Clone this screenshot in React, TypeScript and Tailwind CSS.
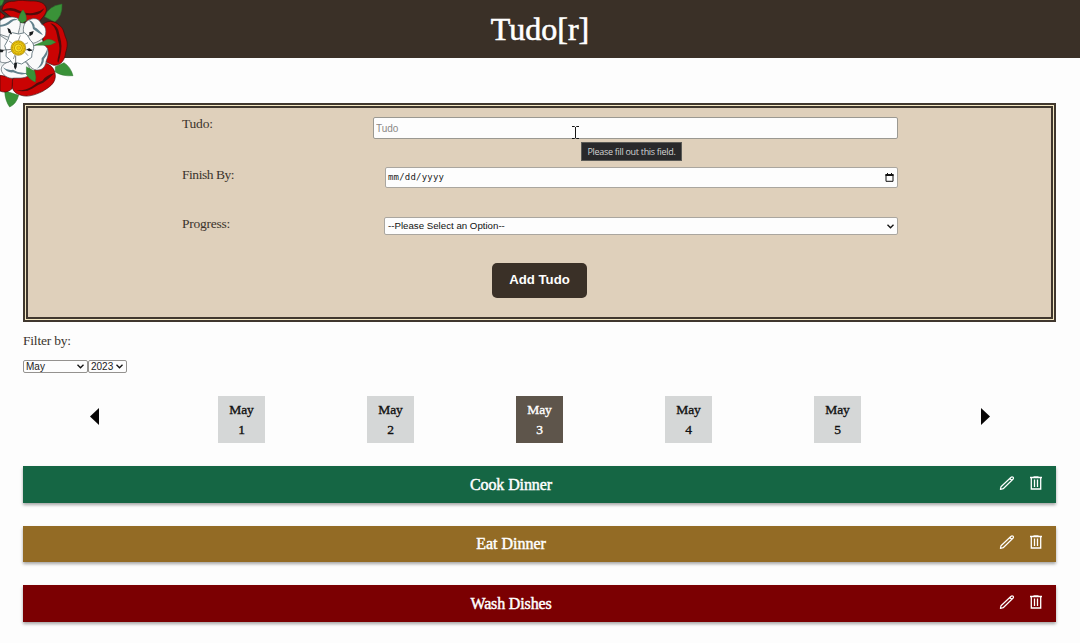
import React from "react";

const SERIF = "font-['Liberation_Serif',serif]";

function Rose() {
  return (
    <svg className="absolute left-0 top-0" width="110" height="115" viewBox="0 0 330 345" fill="none">
      <g fill="#3a9238" stroke="#28702a" strokeWidth="1.5">
        <path d="M134 50Q145 18 186 12Q188 48 164 66Z" />
        <path d="M166 200L192 188Q212 201 219 227Q188 230 166 216Z" />
        <path d="M14 272L56 286Q49 312 29 321Q15 302 14 272Z" />
        <path d="M0 0H12L6 14L0 18Z" />
      </g>
      <g fill="#ca0303" stroke="#450808" strokeWidth="2">
        <path d="M6 30C8 12 22 3 42 4C60 -2 78 3 92 3C116 2 136 8 139 26C141 41 124 56 118 64L66 65L34 52Z" />
        <path d="M124 78C139 58 165 62 178 76C191 84 192 101 197 113C204 126 202 143 197 157C195 179 184 197 161 196L139 187L130 126Z" />
        <path d="M39 234L87 225L116 200L139 190C158 198 166 211 166 230C164 254 144 263 128 274C105 285 82 293 61 285C38 279 31 260 39 234Z" />
        <path d="M0 226L38 232L36 266C22 279 9 277 0 273Z" />
        <path d="M0 35L15 47L6 57L0 55Z" />
      </g>
      <g fill="#510b0b">
        <path d="M8 30Q34 17 59 32Q83 44 107 37Q121 34 133 25Q122 46 101 45Q80 49 54 38Q30 27 8 35Z" />
        <path d="M151 70Q167 73 175 91Q179 108 183 124Q188 151 175 188Q170 187 175 168Q182 143 174 121Q171 104 168 93Q163 79 151 70Z" />
        <path d="M163 220Q139 225 127 242Q109 247 95 260Q77 272 48 271Q76 278 96 266Q112 254 130 248Q147 237 163 220Z" />
      </g>
      <circle cx="55" cy="144" r="76" fill="#e9eded" />
      <g fill="#fafafa" stroke="#45555c" strokeWidth="2">
        <path d="M0 62C15 50 43 47 56 57C66 67 58 84 54 104L27 112L0 103Z" />
        <path d="M72 106C66 81 73 62 94 57C112 52 120 63 125 73C140 79 139 99 135 108C123 122 106 129 98 130Z" />
        <path d="M100 138C119 128 135 132 142 145C148 161 142 174 138 184C137 202 124 212 109 210C91 208 84 188 75 181Z" />
        <path d="M37 181L72 182C87 194 95 211 86 225C74 239 48 232 36 235C17 234 1 218 4 204C9 190 24 186 37 181Z" />
        <path d="M0 106L27 124L20 158L36 179C26 190 9 190 0 185Z" />
      </g>
      <g fill="#61818c">
        <path d="M0 75Q18 73 31 61Q44 51 56 61Q43 58 34 67Q18 81 0 80Z" />
        <path d="M85 60Q104 65 104 82Q118 89 129 106Q115 99 99 87Q98 71 85 60Z" />
        <path d="M142 144Q146 162 132 177Q132 198 109 207Q127 193 125 175Q139 159 142 144Z" />
        <path d="M9 202Q23 213 39 209Q61 223 86 218Q66 229 39 217Q20 219 9 202Z" />
      </g>
      <g fill="#3a9238" stroke="#28702a" strokeWidth="1">
        <path d="M69 29Q82 46 79 62L66 69L55 61Q58 39 69 29Z" />
        <path d="M134 122Q148 112 168 127Q155 136 141 136L104 136Z" />
        <path d="M79 200L104 213Q110 230 106 247Q88 239 79 223Z" />
      </g>
      <path d="M37 98Q58 106 73 98Q85 105 91 121Q103 130 101 146Q94 160 95 172Q78 184 65 192Q52 185 40 193Q29 176 18 169Q22 150 14 137Q27 117 29 103Z" fill="#fff" stroke="#71838a" strokeWidth="3" />
      <g stroke="#62686a" strokeWidth="2">
        <path d="M55 122L61 106M74 133L84 128M75 157L84 167M45 164L40 177M36 153L25 158M38 131L27 123" />
      </g>
      <g stroke="#34383a" strokeWidth="2">
        <path d="M33 103L29 93M84 109L94 99M77 149L94 151M47 167L47 190M34 148L5 151" />
      </g>
      <g fill="#181c1e">
        <path d="M22 83l8 5 6 15-10-5Z" />
        <path d="M101 93l-13 4 1 12 9-6Z" />
        <path d="M80 148l8-3 6 4 3-1-1 4-9 2Z" />
        <path d="M43 188h8l-1 13-4 8-4-8Z" />
        <path d="M0 148l11 2-3 7H0Z" />
      </g>
      <circle cx="55" cy="144" r="22" fill="#efc90b" stroke="#977d10" strokeWidth="2" />
      <circle cx="55" cy="144" r="18" stroke="#a88009" strokeWidth="3" strokeDasharray="3 2" />
      <circle cx="55" cy="144" r="12" fill="#fbe52c" stroke="#ad8409" strokeWidth="2" />
      <circle cx="56" cy="144" r="6" fill="#f4ca09" stroke="#bf980c" strokeWidth="2" />
    </svg>
  );
}

function Chevron() {
  return (
    <svg width="7" height="5" viewBox="0 0 7 5" fill="none" className="shrink-0">
      <path d="M.5 .7L3.5 3.8L6.5 .7" stroke="#111" strokeWidth="1.3" />
    </svg>
  );
}

function Actions() {
  return (
    <div className="flex gap-[14px] pr-[13px] pb-[3px]">
      <button aria-label="Edit">
        <svg width="16" height="16" viewBox="0 0 16 16" fill="none" stroke="#fff" strokeWidth="1.2" strokeLinejoin="round">
          <path d="M1.4 14.4L2 11.7L11.8 2.5Q13 1.4 14.1 2.3Q15 3.1 13.9 4.3L4.2 13.7ZM10.8 3.5L12.7 5.3" />
        </svg>
      </button>
      <button aria-label="Delete">
        <svg width="14" height="16" viewBox="0 0 14 16" fill="none" stroke="#fff" strokeWidth="1.3">
          <path d="M1 2.5H13M4.5 1.8H9.5M2.3 2.5V14H11.7V2.5M5.5 4.5V12M8.5 4.5V12" />
        </svg>
      </button>
    </div>
  );
}

const days = [1, 2, 3, 4, 5];
const tasks = [
  { name: "Cook Dinner", color: "bg-[#156644]", tracking: "tracking-[-0.1px]" },
  { name: "Eat Dinner", color: "bg-[#936b25]", tracking: "tracking-[0px]" },
  { name: "Wash Dishes", color: "bg-[#7b0002]", tracking: "tracking-[-0.15px]" },
];

export default function App() {
  return (
    <div className={`relative h-[643px] w-[1080px] overflow-hidden bg-[#fdfdfd] text-[#3b342c] ${SERIF}`}>
      <header className="flex h-[58px] items-center justify-center bg-[#3a3027]">
        <h1 className="text-[32px] leading-[58px] text-white [-webkit-text-stroke:0.6px_white]">Tudo[r]</h1>
      </header>
      <Rose />

      <main className="px-[23px] pt-[45px]">
        <form className="h-[219px] w-[1033px] border-[2px] border-[#40372e] bg-[#f4e8c3] p-px">
          <div className="h-full border-[2px] border-[#40372e] bg-[#dfd0bb] pl-[154px] pr-[153px] pt-[9px] text-[13.5px]">
            <div className="flex h-[50px] justify-between">
              <label className="leading-[14px] tracking-[-0.2px]">Tudo:</label>
              <div className="relative h-[22px] w-[525px]">
                <input placeholder="Tudo" className="block h-full w-full rounded-[2px] border border-[#9b9992] bg-[#fdfdfd] px-[2px] font-['Liberation_Sans',sans-serif] text-[10px] placeholder:text-[#8c8987]" />
                <svg className="absolute left-[199px] top-[9px]" width="7" height="13" viewBox="0 0 7 13" fill="none">
                  <path d="M0 .5H2.5L3.5 1.5L4.5 .5H7M3.5 1V12M0 12.5H2.5L3.5 11.5L4.5 12.5H7" stroke="#161616" />
                </svg>
                <div className="absolute left-[208px] top-[25px] z-10 flex h-[19px] w-[101px] items-center justify-center whitespace-nowrap border border-[#5b5b57] bg-[#29292b] font-['Open_Sans',sans-serif] text-[9px] tracking-[-0.3px] text-[#d3d3d3]">Please fill out this field.</div>
              </div>
            </div>
            <div className="flex h-[50px] justify-between">
              <label className="leading-[15px] tracking-[-0.45px]">Finish By:</label>
              <div className="flex h-[21px] w-[513px] items-center justify-between rounded-[2px] border border-[#aaa69f] bg-[#fdfdfd] pl-[2px] pr-[3px] font-['DejaVu_Sans_Mono',monospace] text-[9px] tracking-[0.2px] text-[#222]">
                <span className="pt-px">mm/dd/yyyy</span>
                <svg width="9" height="9" viewBox="0 0 9 9" fill="none"><path d="M1 1.5H8V8.3H1Z" stroke="#111" /><path d="M.5 1H8.5V3H.5ZM2 0H3V1H2ZM6 0H7V1H6Z" fill="#111" /></svg>
              </div>
            </div>
            <div className="flex h-[46px] justify-between">
              <label className="leading-[14px] tracking-[-0.25px]">Progress:</label>
              <div className="flex h-[18px] w-[514px] items-center justify-between rounded-[2px] border border-[#aaa69f] bg-[#fdfdfd] pl-[3px] pr-[3px] font-['Liberation_Sans',sans-serif] text-[9.7px] text-[#111]">
                <span>--Please Select an Option--</span><Chevron />
              </div>
            </div>
            <div className="flex justify-center pr-px">
              <button type="button" className="h-[35px] w-[95px] rounded-[5px] bg-[#3a3027] pb-[2px] font-['Liberation_Sans',sans-serif] text-[13.2px] font-bold text-white">Add Tudo</button>
            </div>
          </div>
        </form>

        <section className="pt-[11px]">
          <div className="h-[27px] text-[13.5px] leading-[15px] tracking-[-0.2px]">Filter by:</div>
          <div className="flex font-['Liberation_Sans',sans-serif] text-[10px] text-[#222]">
            <div className="flex h-[13px] w-[65px] items-center justify-between rounded-[2px] border border-[#94928f] pl-[2px] pr-[3px] leading-[11px]"><span>May</span><Chevron /></div>
            <div className="flex h-[13px] w-[39px] items-center justify-between rounded-[2px] border border-[#94928f] pl-[2px] pr-[3px] leading-[11px]"><span>2023</span><Chevron /></div>
          </div>
        </section>

        <section className="mt-[23px] flex h-[47px] justify-between pl-[67px] pr-[67px]">
          <button aria-label="Previous" className="mt-[12px] h-[17px]">
            <svg width="9" height="17" viewBox="0 0 9 17"><path d="M9 0V17L0 8.5Z" fill="#080606" /></svg>
          </button>
          <div className="mr-px flex w-[643px] justify-between">
            {days.map((day) => (
              <button key={day} className={`w-[47px] pt-[1px] text-center text-[13.5px] leading-[20px] ${day === 3 ? "bg-[#5e554b] text-white [-webkit-text-stroke:0.35px_white]" : "bg-[#d5d7d7] text-[#111] [-webkit-text-stroke:0.35px_#111]"}`}>
                May<br />{day}
              </button>
            ))}
          </div>
          <button aria-label="Next" className="mt-[12px] h-[17px]">
            <svg width="9" height="17" viewBox="0 0 9 17"><path d="M0 0V17L9 8.5Z" fill="#080606" /></svg>
          </button>
        </section>

        <section className="flex w-[1033px] flex-col gap-[23px] pt-[23px]">
          {tasks.map((task) => (
            <article key={task.name} className={`flex h-[36.5px] items-center text-white shadow-[0_2px_3px_rgba(0,0,0,0.35)] ${task.color}`}>
              <div className={`flex-1 pt-px text-center text-[16px] [-webkit-text-stroke:0.45px_white] ${task.tracking}`}>{task.name}</div>
              <Actions />
            </article>
          ))}
        </section>
      </main>
    </div>
  );
}
